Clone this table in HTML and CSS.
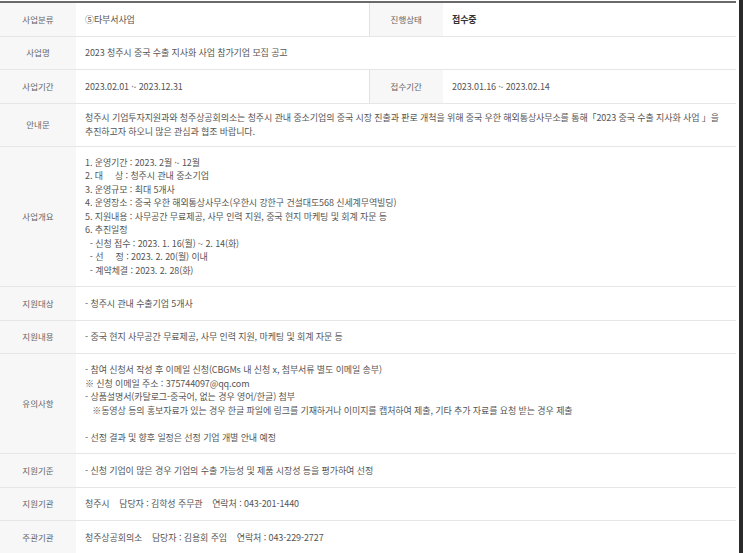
FILE: index.html
```html
<!DOCTYPE html>
<html lang="ko">
<head>
    <meta charset="UTF-8">
    <meta name="viewport" content="width=device-width, initial-scale=1.0">
    <title>사업 상세</title>
    <link rel="stylesheet" href="styles.css">
</head>
<body>
    <div class="page">
        <table class="info">
            <colgroup>
                <col class="c-label">
                <col class="c-value">
                <col class="c-label2">
                <col>
            </colgroup>
            <tr>
                <th>사업분류</th>
                <td>⑤타부서사업</td>
                <th class="mid">진행상태</th>
                <td><b class="status">접수중</b></td>
            </tr>
            <tr>
                <th>사업명</th>
                <td colspan="3">2023 청주시 중국 수출 지사화 사업 참가기업 모집 공고</td>
            </tr>
            <tr>
                <th>사업기간</th>
                <td>2023.02.01 ~ 2023.12.31</td>
                <th class="mid">접수기간</th>
                <td>2023.01.16 ~ 2023.02.14</td>
            </tr>
            <tr>
                <th>안내문</th>
                <td colspan="3" class="notice">청주시 기업투자지원과와 청주상공회의소는 청주시 관내 중소기업의 중국 시장 진출과 판로 개척을 위해 중국 우한 해외통상사무소를 통해「2023 중국 수출 지사화 사업 」을 추진하고자 하오니 많은 관심과 협조 바랍니다.</td>
            </tr>
            <tr>
                <th>사업개요</th>
                <td colspan="3" class="pre">1. 운영기간 : 2023. 2월 ~ 12월
2. 대     상 : 청주시 관내 중소기업
3. 운영규모 : 최대 5개사
4. 운영장소 : 중국 우한 해외통상사무소(우한시 강한구 건설대도568 신세계무역빌딩)
5. 지원내용 : 사무공간 무료제공, 사무 인력 지원, 중국 현지 마케팅 및 회계 자문 등
6. 추진일정
  - 신청 접수 : 2023. 1. 16(월) ~ 2. 14(화)
  - 선     정 : 2023. 2. 20(월) 이내
  - 계약체결 : 2023. 2. 28(화)</td>
            </tr>
            <tr>
                <th>지원대상</th>
                <td colspan="3">- 청주시 관내 수출기업 5개사</td>
            </tr>
            <tr>
                <th>지원내용</th>
                <td colspan="3">- 중국 현지 사무공간 무료제공, 사무 인력 지원, 마케팅 및 회계 자문 등</td>
            </tr>
            <tr>
                <th>유의사항</th>
                <td colspan="3" class="pre">- 참여 신청서 작성 후 이메일 신청(CBGMs 내 신청 x, 첨부서류 별도 이메일 송부)
※ 신청 이메일 주소 : 375744097@qq.com
- 상품설명서(카탈로그-중국어, 없는 경우 영어/한글) 첨부
   ※동영상 등의 홍보자료가 있는 경우 한글 파일에 링크를 기재하거나 이미지를 캡처하여 제출, 기타 추가 자료를 요청 받는 경우 제출

- 선정 결과 및 향후 일정은 선정 기업 개별 안내 예정</td>
            </tr>
            <tr>
                <th>지원기준</th>
                <td colspan="3">- 신청 기업이 많은 경우 기업의 수출 가능성 및 제품 시장성 등을 평가하여 선정</td>
            </tr>
            <tr>
                <th>지원기관</th>
                <td colspan="3" class="pre">청주시    담당자 : 김학성 주무관    연락처 : 043-201-1440</td>
            </tr>
            <tr>
                <th>주관기관</th>
                <td colspan="3" class="pre">청주상공회의소    담당자 : 김용회 주임    연락처 : 043-229-2727</td>
            </tr>
        </table>
    </div>
    <div class="edge"></div>
</body>
</html>
```

FILE: styles.css
```css
html, body {
    margin: 0;
    padding: 0;
    height: 100%;
    overflow: hidden;
}
body {
    display: flex;
    background: #fff;
    font-family: "Noto Sans CJK KR", "Noto Sans", sans-serif;
    font-size: 9px;
    color: #555;
}
.page {
    width: 736px;
    padding-top: 1px;
}
.edge {
    width: 4px;
    margin-left: 3px;
    background: #2a2a2a;
}
.info {
    width: 736px;
    table-layout: fixed;
    border-collapse: collapse;
    border-top: 2px solid #6a6a6a;
}
.c-label { width: 76px; }
.c-value { width: 293px; }
.c-label2 { width: 74px; }
.info th,
.info td {
    border-bottom: 1px solid #e6e6e6;
    line-height: 13.5px;
    vertical-align: middle;
}
.info th {
    background: #f7f7f8;
    color: #666;
    font-size: 8.5px;
    font-weight: normal;
    text-align: center;
    padding: 9.5px 0;
}
.info th.mid {
    border-left: 1px solid #e2e2e2;
}
.info td {
    padding: 9px 8px 9px 9px;
    text-align: left;
    letter-spacing: -0.1px;
}
.info td.notice {
    padding-top: 7.5px;
    padding-bottom: 7.5px;
}
.info .pre {
    white-space: pre-wrap;
}
.status {
    color: #333;
    font-weight: bold;
}
```
